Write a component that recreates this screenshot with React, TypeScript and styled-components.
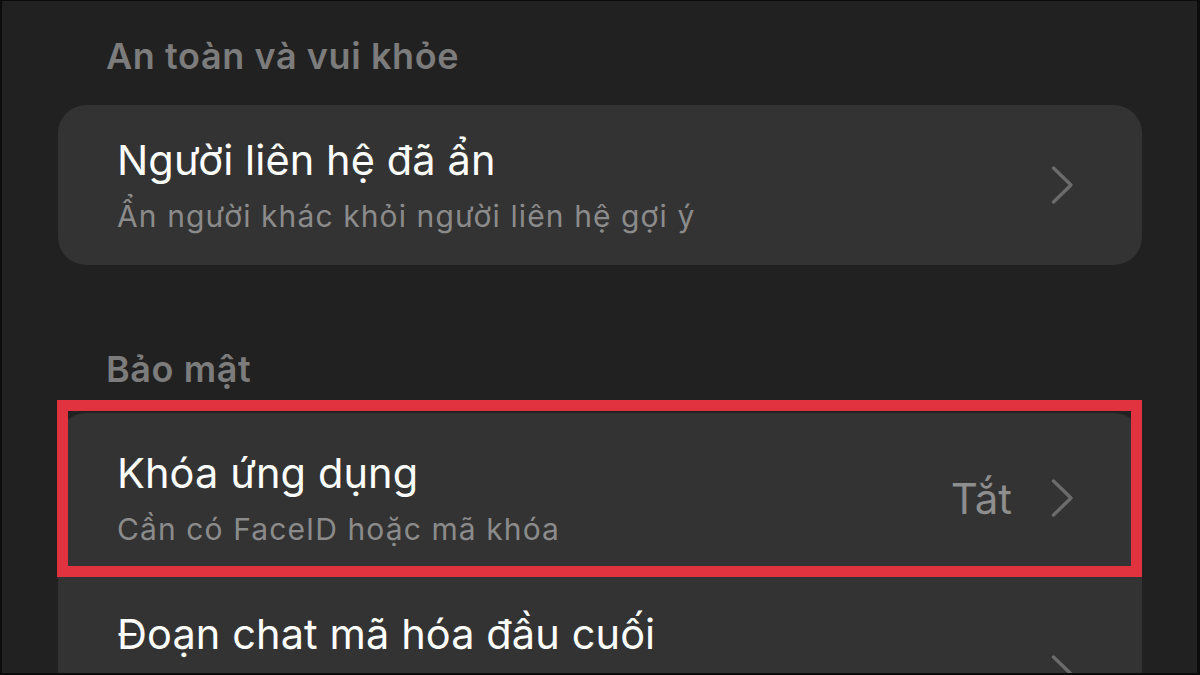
import { FC } from "react";
import styled, { createGlobalStyle } from "styled-components";

const GlobalStyle = createGlobalStyle`
  html, body {
    margin: 0;
    padding: 0;
    background: #212121;
  }
  * {
    box-sizing: border-box;
  }
`;

const Frame = styled.div`
  width: 1200px;
  height: 675px;
  overflow: hidden;
  background-color: #212121;
  border-left: 2px solid #0c0c0c;
  border-top: 1px solid #0c0c0c;
  border-right: 3px solid #0c0c0c;
  border-bottom: 2px solid #0c0c0c;
  font-family: Inter, "Noto Sans", "Liberation Sans", sans-serif;
  -webkit-font-smoothing: antialiased;
`;

const Content = styled.div`
  display: flex;
  flex-direction: column;
  padding: 0 55px 0 56px;
`;

const SectionTitle = styled.div<{ $top: number }>`
  margin-top: ${(p) => p.$top}px;
  padding-left: 48px;
  height: 40px;
  line-height: 40px;
  font-size: 36px;
  font-weight: 600;
  color: #7c7c7c;
  letter-spacing: 0.6px;
`;

const Card = styled.div<{ $top: number }>`
  margin-top: ${(p) => p.$top}px;
  background-color: #333333;
  border-radius: 28px;
  display: flex;
  flex-direction: column;
`;

const Row = styled.div<{ $height: number; $highlight?: boolean }>`
  position: relative;
  height: ${(p) => p.$height}px;
  display: flex;
  align-items: center;
  padding: 0 68px 0 59px;

  ${(p) =>
    p.$highlight &&
    `
    &::after {
      content: "";
      position: absolute;
      top: -13px;
      left: -1px;
      right: 0;
      bottom: 6px;
      border: 11px solid #e0333f;
      pointer-events: none;
    }
  `}
`;

const LowerRow = styled(Row)`
  align-items: flex-start;
  padding-top: 27px;
`;

const TextCol = styled.div`
  flex: 1;
  display: flex;
  flex-direction: column;
  gap: 14px;
`;

const Title = styled.div`
  font-size: 41.5px;
  line-height: 48px;
  color: #ffffff;
  font-weight: 400;
  letter-spacing: 0.1px;
`;

const Subtitle = styled.div`
  font-size: 30px;
  line-height: 36px;
  color: #8b8b8b;
  letter-spacing: 1.1px;
`;

const Value = styled.span`
  font-size: 42px;
  color: #8e8e8e;
  margin-right: 38px;
`;

const Chevron = styled.svg`
  width: 24px;
  height: 40px;
  flex-shrink: 0;
`;

const ArrowPeek = styled.div`
  margin-top: 44px;
`;

const Arrow: FC = () => (
  <Chevron viewBox="0 0 24 40">
    <path
      d="M3.5 3 L21 20 L3.5 37"
      fill="none"
      stroke="#6b6b6b"
      strokeWidth="3.4"
      strokeLinecap="round"
      strokeLinejoin="round"
    />
  </Chevron>
);

type SettingRowProps = {
  title: string;
  subtitle?: string;
  value?: string;
  height: number;
  highlight?: boolean;
};

const SettingRow: FC<SettingRowProps> = ({ title, subtitle, value, height, highlight }) => (
  <Row $height={height} $highlight={highlight}>
    <TextCol>
      <Title>{title}</Title>
      {subtitle && <Subtitle>{subtitle}</Subtitle>}
    </TextCol>
    {value && <Value>{value}</Value>}
    <Arrow />
  </Row>
);

export default function App() {
  return (
    <>
      <GlobalStyle />
      <Frame>
        <Content>
          <SectionTitle $top={35}>An toàn và vui khỏe</SectionTitle>
          <Card $top={29}>
            <SettingRow
              height={160}
              title="Người liên hệ đã ẩn"
              subtitle="Ẩn người khác khỏi người liên hệ gợi ý"
            />
          </Card>
          <SectionTitle $top={84}>Bảo mật</SectionTitle>
          <Card $top={24}>
            <SettingRow
              height={170}
              highlight
              title="Khóa ứng dụng"
              subtitle="Cần có FaceID hoặc mã khóa"
              value="Tắt"
            />
            <LowerRow $height={160}>
              <TextCol>
                <Title>Đoạn chat mã hóa đầu cuối</Title>
              </TextCol>
              <ArrowPeek>
                <Arrow />
              </ArrowPeek>
            </LowerRow>
          </Card>
        </Content>
      </Frame>
    </>
  );
}
